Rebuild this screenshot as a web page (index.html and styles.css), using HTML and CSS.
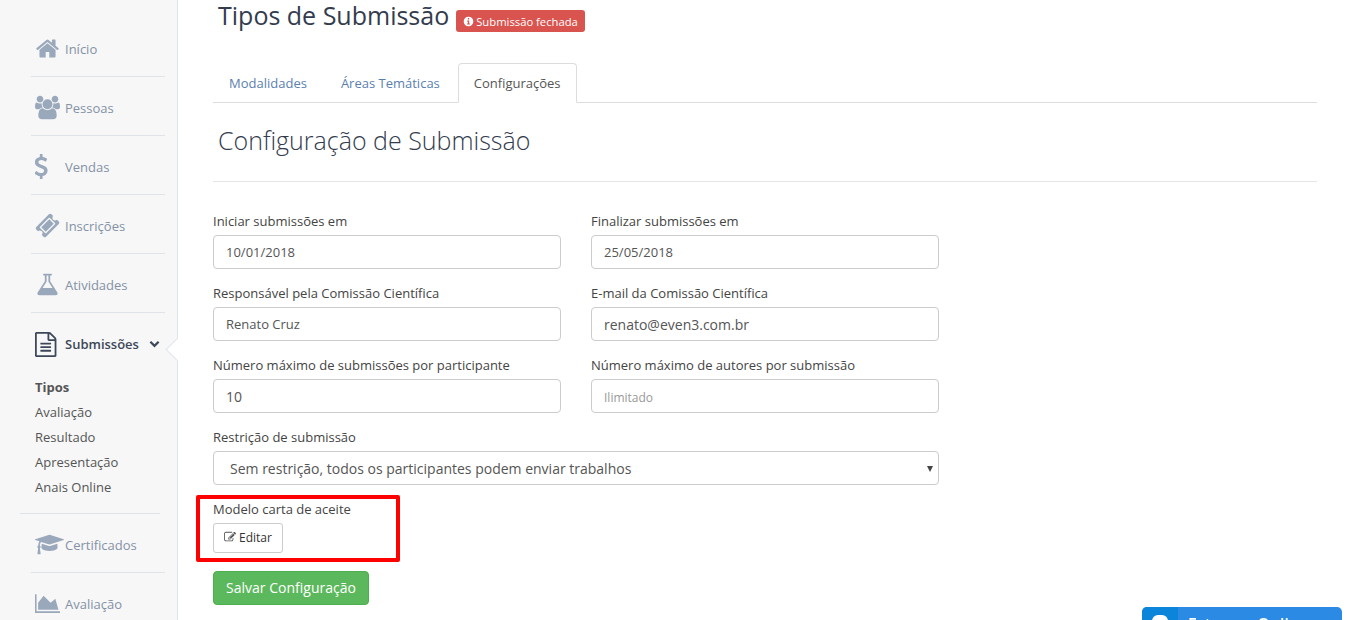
FILE: index.html
```html
<!DOCTYPE html>
<html lang="pt-BR">
<head>
    <meta charset="UTF-8">
    <meta name="viewport" content="width=device-width, initial-scale=1.0">
    <title>Tipos de Submissão</title>
    <link rel="stylesheet" href="styles.css">
</head>
<body>
    <div class="page">
        <aside class="sidebar">
            <a href="#" class="side-item">
                <svg class="side-icon" viewBox="0 0 1792 1792"><path d="M1472 992v480q0 26-19 45t-45 19h-384v-384h-256v384h-384q-26 0-45-19t-19-45v-480q0-1 .5-3t.5-3l575-474 575 474q1 2 1 6zm223-69l-62 74q-8 9-21 11h-3q-13 0-21-7l-692-577-692 577q-12 8-24 7-13-2-21-11l-62-74q-8-10-7-23.500t11-21.500l719-599q32-26 76-26t76 26l244 204v-195q0-14 9-23t23-9h192q14 0 23 9t9 23v408l219 182q10 8 11 21.500t-7 23.500z"/></svg>
                Início
            </a>
            <a href="#" class="side-item">
                <svg class="side-icon" viewBox="0 0 1920 1792"><path d="M593 896q-162 5-265 128h-134q-82 0-138-40.500t-56-118.500q0-353 124-353 6 0 43.500 21t97.500 42.500 119 21.500q67 0 133-23-5 37-5 66 0 139 81 256zm1071 637q0 120-73 189.500t-194 69.500h-874q-121 0-194-69.500t-73-189.500q0-53 3.500-103.500t14-109 26.500-108.500 43-97.500 62-81 85.500-53.500 111.500-20q10 0 43 21.500t73 48 107 48 135 21.500 135-21.500 107-48 73-48 43-21.500q61 0 111.500 20t85.500 53.500 62 81 43 97.500 26.500 108.500 14 109 3.500 103.500zm-1024-1277q0 106-75 181t-181 75-181-75-75-181 75-181 181-75 181 75 75 181zm704 384q0 159-112.500 271.500t-271.500 112.500-271.500-112.500-112.500-271.500 112.500-271.500 271.500-112.500 271.500 112.500 112.500 271.500zm576 225q0 78-56 118.500t-138 40.500h-134q-103-123-265-128 81-117 81-256 0-29-5-66 66 23 133 23 59 0 119-21.500t97.500-42.500 43.500-21q124 0 124 353zm-128-609q0 106-75 181t-181 75-181-75-75-181 75-181 181-75 181 75 75 181z"/></svg>
                Pessoas
            </a>
            <a href="#" class="side-item">
                <svg class="side-icon" viewBox="460 0 1408 1792" preserveAspectRatio="xMinYMid"><path d="M1362 1185q0 153-99.500 263.500t-258.500 136.500v175q0 14-9 23t-23 9h-135q-13 0-22.500-9.500t-9.500-22.500v-175q-66-9-127.500-31t-101.500-44.500-74-48-46.500-37.500-17.500-18q-17-21-2-41l103-135q7-10 23-12 15-2 24 9l2 2q113 99 243 125 37 8 74 8 81 0 142.500-43t61.500-122q0-28-15-53t-33.500-42-58.500-37.500-66-32-80-32.500q-39-16-61.500-25t-61.500-26.500-62.500-31-56.500-35.500-53.500-42.500-43.500-49-35.500-58-21-66.500-8.500-78q0-138 98-242t255-134v-180q0-13 9.500-22.500t22.500-9.500h135q14 0 23 9t9 23v176q57 6 110.500 23t87 33.500 63.500 37.500 39 29 15 14q17 18 5 38l-81 146q-8 15-23 16-14 3-27-7-3-3-14.500-12t-39-26.500-58.500-32-74.500-26-85.500-11.500q-95 0-155 43t-60 111q0 26 8.500 48t29.500 41.500 39.500 33 56 31 60.500 27 70 27.500q53 20 81 31.500t76 35 75.500 42.500 62 50 53 63.500 31.500 76.500 13 94z"/></svg>
                Vendas
            </a>
            <a href="#" class="side-item">
                <svg class="side-icon" viewBox="0 0 1792 1792"><path d="M1024 452l316 316-572 572-316-316zm-211 979l618-618q19-19 19-45t-19-45l-362-362q-18-18-45-18t-45 18l-618 618q-19 19-19 45t19 45l362 362q18 18 45 18t45-18zm889-637l-907 908q-37 37-90.500 37t-90.500-37l-126-126q56-56 56-136t-56-136-136-56-136 56l-125-126q-37-37-37-90.500t37-90.500l907-906q37-37 90.500-37t90.500 37l125 125q-56 56-56 136t56 136 136 56 136-56l126 125q37 37 37 90.500t-37 90.500z"/></svg>
                Inscrições
            </a>
            <a href="#" class="side-item">
                <svg class="side-icon" viewBox="0 0 1792 1792"><path d="M1591 1448q56 89 21.500 152.500t-140.500 63.500h-1152q-106 0-140.500-63.500t21.500-152.500l503-793v-399h-64q-26 0-45-19t-19-45 19-45 45-19h512q26 0 45 19t19 45-19 45-45 19h-64v399zm-779-725l-272 429h712l-272-429-20-31v-437h-128v437z"/></svg>
                Atividades
            </a>
            <a href="#" class="side-item side-item-open">
                <svg class="side-icon side-icon-dark" viewBox="128 0 1664 1792" preserveAspectRatio="xMinYMid"><path d="M1596 380q28 28 48 76t20 88v1152q0 40-28 68t-68 28h-1344q-40 0-68-28t-28-68v-1600q0-40 28-68t68-28h896q40 0 88 20t76 48zm-444-244v376h376q-10-29-22-41l-313-313q-12-12-41-22zm384 1528v-1024h-416q-40 0-68-28t-28-68v-416h-768v1536h1280zm-1024-864q0-14 9-23t23-9h704q14 0 23 9t9 23v64q0 14-9 23t-23 9h-704q-14 0-23-9t-9-23v-64zm736 224q14 0 23 9t9 23v64q0 14-9 23t-23 9h-704q-14 0-23-9t-9-23v-64q0-14 9-23t23-9h704zm0 256q14 0 23 9t9 23v64q0 14-9 23t-23 9h-704q-14 0-23-9t-9-23v-64q0-14 9-23t23-9h704z"/></svg>
                Submissões
                <svg class="side-chevron" viewBox="0 0 12 8"><path d="M1.500 1.500L6 6l4.500-4.500"/></svg>
            </a>
            <ul class="sub-menu">
                <li><a href="#" class="sub-active">Tipos</a></li>
                <li><a href="#">Avaliação</a></li>
                <li><a href="#">Resultado</a></li>
                <li><a href="#">Apresentação</a></li>
                <li><a href="#">Anais Online</a></li>
            </ul>
            <a href="#" class="side-item">
                <svg class="side-icon side-icon-wide" viewBox="0 0 2304 1792"><path d="M1774 836l18 316q4 69-82 128t-235 93.500-323 34.500-323-34.500-235-93.500-82-128l18-316 574 181q22 7 48 7t48-7zm530-324q0 23-22 31l-1120 352q-4 1-10 1t-10-1l-652-206q-43 34-71 111.500t-34 178.500q63 36 63 109 0 69-58 107l58 433q2 14-8 25-9 11-24 11h-192q-15 0-24-11-10-11-8-25l58-433q-58-38-58-107 0-73 65-111 11-207 98-330l-333-104q-22-8-22-31t22-31l1120-352q4-1 10-1t10 1l1120 352q22 8 22 31z"/></svg>
                Certificados
            </a>
            <a href="#" class="side-item">
                <svg class="side-icon" viewBox="0 0 2048 1792"><path d="M2048 1536v128h-2048v-1536h128v1408h1920zm-384-1024l256 896h-1664v-576l448-576 576 576z"/></svg>
                Avaliação
            </a>
        </aside>

        <main class="content">
            <div class="page-title">
                <h1>Tipos de Submissão</h1>
                <span class="badge">
                    <svg class="badge-icon" viewBox="0 0 16 16"><path fill-rule="evenodd" d="M8 1a7 7 0 1 1 0 14A7 7 0 0 1 8 1zM7 3v2.200h2V3zM6 6.500v1.500h1v3H6v1.500h4V11H9V6.500z"/></svg>
                    Submissão fechada
                </span>
            </div>

            <nav class="tabs">
                <a href="#" class="tab">Modalidades</a>
                <a href="#" class="tab">Áreas Temáticas</a>
                <a href="#" class="tab tab-active">Configurações</a>
            </nav>

            <h2 class="section-title">Configuração de Submissão</h2>

            <form class="config-form">
                <div class="form-grid">
                    <div class="form-group">
                        <label>Iniciar submissões em</label>
                        <input type="text" class="form-input" value="10/01/2018">
                    </div>
                    <div class="form-group">
                        <label>Finalizar submissões em</label>
                        <input type="text" class="form-input" value="25/05/2018">
                    </div>
                    <div class="form-group">
                        <label>Responsável pela Comissão Científica</label>
                        <input type="text" class="form-input" value="Renato Cruz">
                    </div>
                    <div class="form-group">
                        <label>E-mail da Comissão Científica</label>
                        <input type="text" class="form-input form-input-large" value="renato@even3.com.br">
                    </div>
                    <div class="form-group">
                        <label>Número máximo de submissões por participante</label>
                        <input type="text" class="form-input form-input-large" value="10">
                    </div>
                    <div class="form-group">
                        <label>Número máximo de autores por submissão</label>
                        <input type="text" class="form-input form-input-empty" placeholder="Ilimitado">
                    </div>
                    <div class="form-group form-group-wide">
                        <label>Restrição de submissão</label>
                        <div class="select-wrap">
                            <select class="form-select">
                                <option>Sem restrição, todos os participantes podem enviar trabalhos</option>
                            </select>
                        </div>
                    </div>
                </div>

                <div class="letter-field">
                    <div class="highlight-box"></div>
                    <label>Modelo carta de aceite</label>
                    <button type="button" class="edit-btn">
                        <svg class="edit-icon" viewBox="0 0 1792 1792"><path d="M888 1184l116-116-152-152-116 116v56h96v96h56zm440-720q-16-16-33 1l-350 350q-17 17-1 33t33-1l350-350q17-17 1-33zm80 594v190q0 119-84.500 203.500t-203.500 84.500h-832q-119 0-203.500-84.500t-84.500-203.500v-832q0-119 84.500-203.500t203.500-84.500h832q63 0 117 25 15 7 18 23 3 17-9 29l-49 49q-14 14-32 8-23-6-45-6h-832q-66 0-113 47t-47 113v832q0 66 47 113t113 47h832q66 0 113-47t47-113v-126q0-13 9-22l64-64q15-15 35-7t20 29zm-96-738l288 288-672 672h-288v-288zm444 132l-92 92-288-288 92-92q28-28 68-28t68 28l152 152q28 28 28 68t-28 68z"/></svg>
                        Editar
                    </button>
                </div>

                <button type="button" class="save-btn">Salvar Configuração</button>
            </form>
        </main>
    </div>

    <div class="chat-widget">
        <div class="chat-icon"><span class="chat-bubble"></span></div>
        <div class="chat-text">Estamos Online</div>
    </div>
</body>
</html>
```

FILE: styles.css
```css
* {
    box-sizing: border-box;
}

html, body {
    height: 100%;
    margin: 0;
    overflow: hidden;
}

body {
    font-family: "Open Sans", sans-serif;
    font-size: 13px;
    color: #333;
    background: white;
}

.page {
    display: flex;
    height: 100%;
}

/* sidebar */

.sidebar {
    position: relative;
    flex: 0 0 178px;
    padding-top: 18px;
    background: #f7f7f7;
    border-right: 1px solid #dfe3ea;
}

.side-item {
    display: flex;
    align-items: center;
    height: 59px;
    margin: 0 12px 0 31px;
    padding: 3px 0 0 4px;
    border-bottom: 1px solid #dfe3ea;
    color: #8492a6;
    text-decoration: none;
}

.side-icon {
    flex: 0 0 25px;
    width: 25px;
    height: 25px;
    margin-right: 5px;
    fill: #9aa8bc;
}

.side-icon-dark {
    fill: #3c4858;
}

.side-icon-wide {
    flex-basis: 29px;
    width: 29px;
    margin-right: 1px;
}

.side-item-open {
    position: relative;
    border-bottom: none;
    color: #3c4858;
    font-weight: 600;
}

.side-item-open::after {
    content: "";
    position: absolute;
    right: -21px;
    top: 28px;
    width: 16px;
    height: 16px;
    background: white;
    border-left: 1px solid #dfe3ea;
    border-bottom: 1px solid #dfe3ea;
    transform: rotate(45deg);
}

.side-chevron {
    width: 11px;
    height: 8px;
    margin-left: 10px;
    fill: none;
    stroke: #3c4858;
    stroke-width: 2.4;
}

.sub-menu {
    list-style: none;
    margin: 0 17px 0 20px;
    padding: 3px 0 13px 15px;
    border-bottom: 1px solid #dfe3ea;
}

.sub-menu li {
    height: 25px;
    line-height: 25px;
}

.sub-menu a {
    color: #555;
    text-decoration: none;
}

.sub-menu .sub-active {
    font-weight: 700;
}

/* main */

.content {
    flex: 1;
    padding: 0 32px 0 35px;
}

.page-title {
    display: flex;
    align-items: center;
    height: 33px;
}

.page-title h1 {
    margin: -4px 0 0 5px;
    font-size: 25px;
    font-weight: 400;
    color: #333c4e;
}

.badge {
    display: flex;
    align-items: center;
    height: 22px;
    margin: 9px 0 0 7px;
    padding: 0 7px 0 7px;
    background: #d9534f;
    border-radius: 3px;
    color: white;
    font-size: 11.250px;
}

.badge-icon {
    width: 11px;
    height: 11px;
    margin-right: 2px;
    fill: white;
}

.tabs {
    display: flex;
    height: 40px;
    margin-top: 30px;
    border-bottom: 1px solid #ddd;
}

.tab {
    height: 40px;
    margin-right: 2px;
    padding: 0 15px;
    border: 1px solid transparent;
    line-height: 39px;
    color: #5b7fb0;
    text-decoration: none;
}

.tab-active {
    background: white;
    border-color: #ddd;
    border-bottom-color: white;
    border-radius: 4px 4px 0 0;
    color: #555;
}

.section-title {
    height: 79px;
    margin: 0;
    padding: 19px 5px 0;
    border-bottom: 1px solid #e5e5e5;
    font-size: 25px;
    font-weight: 300;
    line-height: 37px;
    color: #333c4e;
}

.config-form {
    padding-top: 29px;
}

.form-grid {
    display: grid;
    grid-template-columns: 348px 348px;
    column-gap: 30px;
    row-gap: 14px;
}

.form-group-wide {
    grid-column: 1 / 3;
}

.form-group label,
.letter-field label {
    display: block;
    height: 24px;
    line-height: 20px;
    color: #444;
}

.form-input,
.form-select {
    display: block;
    width: 100%;
    height: 34px;
    padding: 0 12px;
    background: white;
    border: 1px solid #ccc;
    border-radius: 4px;
    font-family: "Open Sans", sans-serif;
    font-size: 13px;
    color: #555;
}

.form-input-large {
    font-size: 14px;
}

.form-input-empty {
    padding-top: 2px;
}

.form-input::placeholder {
    color: #999;
    font-size: 12px;
}

.select-wrap {
    position: relative;
}

.select-wrap::after {
    content: "";
    position: absolute;
    right: 6px;
    top: 15px;
    border-left: 3px solid transparent;
    border-right: 3px solid transparent;
    border-top: 6px solid #444;
}

.form-select {
    padding: 0 16px;
    font-size: 14px;
    appearance: none;
}

.letter-field {
    position: relative;
    margin-top: 14px;
}

.highlight-box {
    position: absolute;
    left: -17px;
    top: -4px;
    width: 204px;
    height: 67px;
    border: 4px solid #f00;
    border-radius: 2px;
}

.edit-btn {
    display: flex;
    align-items: center;
    height: 30px;
    padding: 0 10px 2px;
    background: white;
    border: 1px solid #ccc;
    border-radius: 3px;
    font-family: "Open Sans", sans-serif;
    font-size: 12px;
    color: #333;
}

.edit-icon {
    width: 12px;
    height: 12px;
    margin-right: 3px;
    fill: #555;
}

.save-btn {
    display: block;
    width: 156px;
    height: 34px;
    margin-top: 18px;
    padding-bottom: 3px;
    background: #5cb85c;
    border: 1px solid #4cae4c;
    border-radius: 4px;
    font-family: "Open Sans", sans-serif;
    font-size: 14px;
    color: white;
}

/* chat */

.chat-widget {
    position: fixed;
    left: 1142px;
    top: 607px;
    display: flex;
    width: 200px;
    height: 40px;
    background: #2b8ae4;
    border-radius: 5px 5px 0 0;
    overflow: hidden;
    color: white;
    font-size: 16px;
    font-weight: 600;
}

.chat-icon {
    flex: 0 0 36px;
    background: #0a85d9;
    padding: 8px 10px;
}

.chat-bubble {
    display: block;
    width: 16px;
    height: 14px;
    background: white;
    border-radius: 6px;
}

.chat-text {
    padding: 6px 10px;
}
```
